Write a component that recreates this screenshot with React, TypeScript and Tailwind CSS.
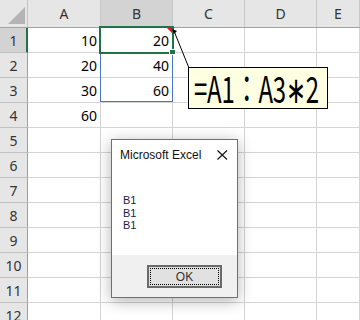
import React from "react";

const cols = ["A", "B", "C", "D", "E"];
const colW = ["w-[73px]", "w-[72px]", "w-[72px]", "w-[72px]", "flex-1"];

const data: Record<number, string[]> = {
  1: ["10", "20"],
  2: ["20", "40"],
  3: ["30", "60"],
  4: ["60", ""],
};

function HeaderRow() {
  return (
    <div className="flex h-[28px] border-b border-[#a3a3a3] bg-[#e6e6e6]">
      <div className="relative w-[28px] shrink-0 border-r border-[#c4c4c4]">
        <svg className="absolute left-0 top-0" width="28" height="27">
          <polygon points="8,24 25,7 25,24" fill="#b4b4b4" />
        </svg>
      </div>
      {cols.map((c, i) => (
        <div
          key={c}
          className={`${colW[i]} shrink-0 flex items-center justify-center border-r border-[#c8c8c8] text-[14px] text-[#333] ${
            c === "B" ? "bg-[#d3d3d3]" : ""
          }`}
        >
          {c}
        </div>
      ))}
    </div>
  );
}

function Row({ n }: { n: number }) {
  const vals = data[n] || [];
  return (
    <div className="flex h-[25px] border-b border-[#d4d4d4]">
      <div
        className={`w-[28px] shrink-0 flex items-center justify-center text-[14px] text-[#333] border-b border-[#c0c0c0] -mb-px ${
          n === 1
            ? "bg-[#d3d3d3] border-r-2 border-r-[#217346] pl-[1px]"
            : "bg-[#e6e6e6] border-r border-r-[#9e9e9e]"
        }`}
      >
        {n}
      </div>
      {cols.map((c, i) => (
        <div
          key={c}
          className={`${colW[i]} shrink-0 flex items-center justify-end pr-[3px] border-r border-[#d4d4d4] text-[14px] text-black`}
        >
          {vals[i] || ""}
        </div>
      ))}
    </div>
  );
}

export default function App() {
  const rows = Array.from({ length: 12 }, (_, i) => i + 1);
  return (
    <div className="relative w-[360px] h-[320px] overflow-hidden bg-white font-['Noto_Sans',sans-serif]">
      <HeaderRow />
      {rows.map((n) => (
        <Row key={n} n={n} />
      ))}

      {/* range border */}
      <div className="absolute left-[100px] top-[27px] w-[73px] h-[75px] border border-[#4a76c9]" />
      {/* active cell */}
      <div className="absolute left-[99px] top-[26px] w-[75px] h-[28px] border-2 border-[#217346]" />
      {/* fill handle */}
      <div className="absolute left-[169px] top-[49px] w-[7px] h-[6px] bg-[#217346] border border-white" />
      {/* comment indicator */}
      <div className="absolute left-[167px] top-[28px] w-0 h-0 border-t-[5px] border-t-[#e81123] border-l-[5px] border-l-transparent" />

      {/* comment connector */}
      <svg className="absolute left-0 top-0" width="360" height="320">
        <line x1="174" y1="31" x2="189" y2="68" stroke="#000" strokeWidth="1" />
        <polygon points="172,29 177,31 174,34" fill="#000" />
      </svg>

      {/* comment box */}
      <div className="absolute left-[188px] top-[67px] w-[140px] h-[42px] bg-[#ffffe1] border border-black flex items-center pl-[5px]">
        <span className="inline-block scale-y-[1.54] whitespace-nowrap text-[24px] leading-none text-black tracking-[-0.2px] font-['Noto_Sans_CJK_JP',sans-serif]">
          =A1：A3∗2
        </span>
      </div>

      {/* dialog */}
      <div className="absolute left-[111px] top-[139px] w-[127px] h-[159px] border border-[#707070] bg-white flex flex-col shadow-[0_3px_14px_rgba(0,0,0,0.3)] font-['Liberation_Sans',sans-serif]">
        <div className="h-[30px] flex items-center justify-between pl-[8px] pr-[9px]">
          <span className="text-[12px] text-[#111]">Microsoft Excel</span>
          <svg width="11" height="10" viewBox="0 0 11 10">
            <path d="M0.5 0.5 L10 9.5 M10 0.5 L0.5 9.5" stroke="#111" strokeWidth="1.1" />
          </svg>
        </div>
        <div className="flex-1 pl-[11px] pt-[24px] text-[11px] leading-[12.5px] text-[#1b1b4a]">
          <div>B1</div>
          <div>B1</div>
          <div>B1</div>
        </div>
        <div className="h-[42px] bg-[#f0f0f0] flex justify-end items-start pt-[10px] pr-[15px]">
          <div className="w-[75px] h-[23px] border-2 border-[#6a6a6a] bg-[#e1e1e1] p-[1px]">
            <div className="w-full h-full border border-dotted border-black flex items-center justify-center text-[12px] text-[#333]">
              OK
            </div>
          </div>
        </div>
      </div>
    </div>
  );
}
